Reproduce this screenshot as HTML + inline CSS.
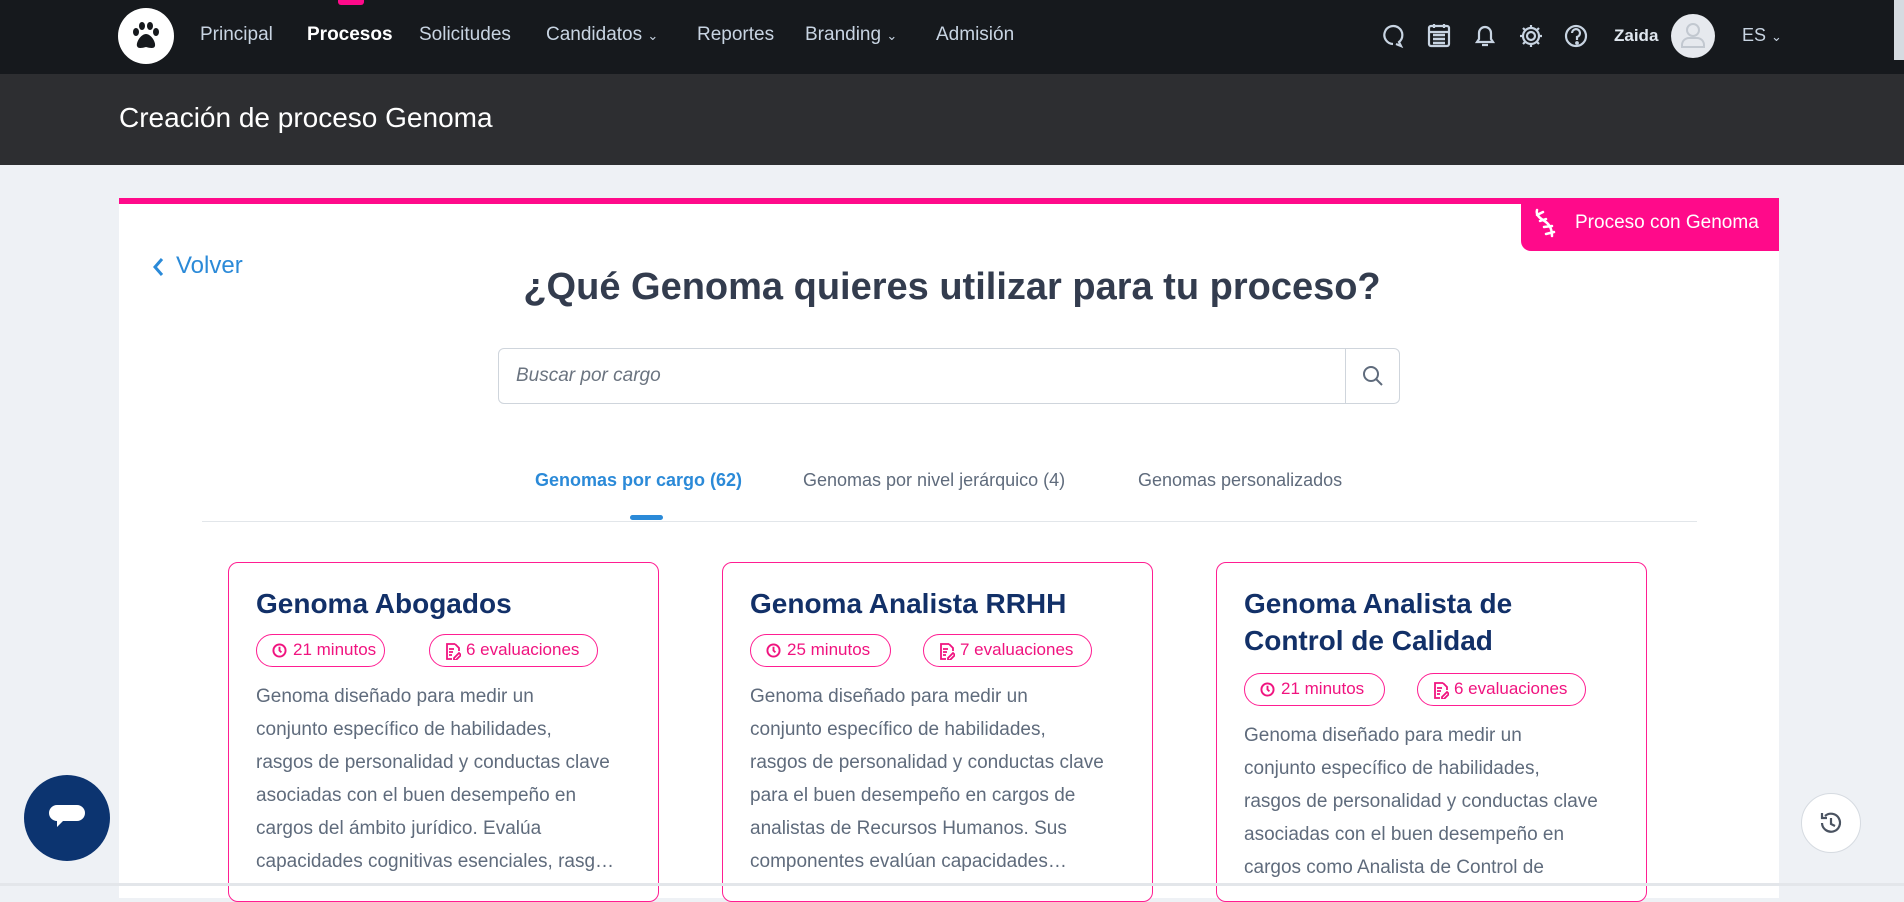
<!DOCTYPE html>
<html><head><meta charset="utf-8"><style>
*{margin:0;padding:0;box-sizing:border-box}
body{width:1904px;height:886px;overflow:hidden;background:#eef1f5;font-family:"Liberation Sans",sans-serif;position:relative}
.abs{position:absolute;white-space:nowrap}
.nav{position:absolute;left:0;top:0;width:1904px;height:74px;background:#16191d}
.hdr{position:absolute;left:0;top:74px;width:1904px;height:91px;background:#2d2e31}
.ni{position:absolute;top:24px;font-size:19px;color:#c8d4e2}
.card{position:absolute;left:119px;top:198px;width:1660px;height:700px;background:#fff;border-top:6px solid #ff0a8a}
.gc{position:absolute;top:562px;width:431px;height:340px;border:1.5px solid #ff1e92;border-radius:10px;background:#fff}
.gt{position:absolute;left:27px;font-size:28px;font-weight:bold;color:#123068;white-space:nowrap;line-height:37px}
.pill{position:absolute;height:33px;border:1.5px solid #ff1e92;border-radius:17px;color:#f0137f;font-size:17px;line-height:30px;padding-left:36px;white-space:nowrap}
.pill svg{position:absolute;left:15px;top:8px}
.desc{position:absolute;left:27px;font-size:19px;color:#5f6b7c;line-height:33px;white-space:nowrap}
</style></head><body>
<div class="nav"></div>
<div class="abs" style="left:338px;top:0;width:26px;height:5px;background:#ff0a8a;border-radius:0 0 3px 3px"></div>
<div class="abs" style="left:118px;top:8px;width:56px;height:56px;border-radius:50%;background:#fff"></div>
<svg class="abs" style="left:128px;top:18px" width="36" height="36" viewBox="0 0 36 36"><g fill="#16191d"><ellipse cx="8" cy="14" rx="3" ry="4"/><ellipse cx="14" cy="8" rx="3" ry="4"/><ellipse cx="22" cy="8" rx="3" ry="4"/><ellipse cx="28" cy="14" rx="3" ry="4"/><path d="M18 16c-5 0-10 8-9 12 1 3 5 2 9 1 4 1 8 2 9-1 1-4-4-12-9-12z"/></g></svg>
<div class="ni" style="left:200px">Principal</div>
<div class="ni" style="left:307px;color:#fff;font-weight:bold">Procesos</div>
<div class="ni" style="left:419px">Solicitudes</div>
<div class="ni" style="left:546px">Candidatos <span style="font-size:13px">⌄</span></div>
<div class="ni" style="left:697px">Reportes</div>
<div class="ni" style="left:805px">Branding <span style="font-size:13px">⌄</span></div>
<div class="ni" style="left:936px">Admisión</div>
<svg class="abs" style="left:1380px;top:22px" width="220" height="28" viewBox="0 0 220 28" fill="none" stroke="#c8d4e2" stroke-width="2.2">
<path d="M13 22a9 9 0 1 1 6-2l2 4-5-2"/><rect x="49" y="4" width="20" height="20" rx="2"/><path d="M49 10h20M54 2v4M64 2v4"/><path d="M53 13h12M53 17h12M53 21h12" stroke-width="2.5"/>
<path d="M97 20h16l-2-3v-6a6 6 0 0 0-12 0v6z M102 23h6"/>
<circle cx="151" cy="14" r="4"/><path d="M151 3v3M151 22v3M140 14h3M159 14h3M143 6l2 2M157 20l2 2M143 22l2-2M157 8l2-2"/><circle cx="151" cy="14" r="8"/>
<circle cx="196" cy="14" r="10"/><path d="M192 11a4 4 0 1 1 5 4v3"/><circle cx="197" cy="21" r="0.8" fill="#c8d4e2"/>
</svg>
<div class="abs" style="left:1614px;top:26px;font-size:17px;font-weight:bold;color:#dfe6ee">Zaida</div>
<div class="abs" style="left:1671px;top:14px;width:44px;height:44px;border-radius:50%;background:#e6e9ee"></div>
<svg class="abs" style="left:1679px;top:20px" width="28" height="30" viewBox="0 0 28 30" fill="none" stroke="#c2c8d0" stroke-width="2"><circle cx="14" cy="10" r="6"/><path d="M3 27v-2a7 7 0 0 1 7-7h8a7 7 0 0 1 7 7v2z"/></svg>
<div class="abs" style="left:1742px;top:25px;font-size:18px;color:#c8d4e2">ES <span style="font-size:13px">⌄</span></div>
<div class="abs" style="left:1894px;top:0;width:10px;height:60px;background:#d6dbe1"></div>
<div class="hdr"></div>
<div class="abs" style="left:119px;top:102px;font-size:28px;color:#fff">Creación de proceso Genoma</div>
<div class="card"></div>
<div class="abs" style="left:1521px;top:198px;width:258px;height:53px;background:#ff0a8a;border-radius:0 0 0 10px"></div>
<svg class="abs" style="left:1532px;top:206px" width="28" height="36" viewBox="0 0 28 36" fill="none" stroke="#fff" stroke-width="2.5" stroke-linecap="round"><path d="M5 4c-1 4 1 7 6 10 5 3 9 7 9 16M5 9l6-3M8 15l6-2M12 21l8-1M14 28l8-2"/></svg>
<div class="abs" style="left:1575px;top:212px;font-size:19px;color:#fff">Proceso con Genoma</div>
<svg class="abs" style="left:151px;top:256px" width="14" height="22" viewBox="0 0 14 22" fill="none" stroke="#2b8ad8" stroke-width="3"><path d="M11 3l-7 8 7 8"/></svg>
<div class="abs" style="left:176px;top:252px;font-size:24px;color:#2b8ad8">Volver</div>
<div class="abs" style="left:0;width:1904px;text-align:center;top:266px;font-size:38px;font-weight:bold;color:#333c4e">¿Qué Genoma quieres utilizar para tu proceso?</div>
<div class="abs" style="left:498px;top:348px;width:902px;height:56px;border:1px solid #cfd5dc;border-radius:6px;background:#fff"></div>
<div class="abs" style="left:1345px;top:348px;width:1px;height:56px;background:#cfd5dc"></div>
<div class="abs" style="left:516px;top:365px;font-size:19px;font-style:italic;color:#6b7480">Buscar por cargo</div>
<svg class="abs" style="left:1361px;top:364px" width="24" height="24" viewBox="0 0 24 24" fill="none" stroke="#5f6b7c" stroke-width="2"><circle cx="10" cy="10" r="7"/><path d="M15 15l6 6"/></svg>
<div class="abs" style="left:535px;top:470px;font-size:18px;font-weight:bold;color:#2b8ad8">Genomas por cargo (62)</div>
<div class="abs" style="left:803px;top:470px;font-size:18px;color:#5f6b7c">Genomas por nivel jerárquico (4)</div>
<div class="abs" style="left:1138px;top:470px;font-size:18px;color:#5f6b7c">Genomas personalizados</div>
<div class="abs" style="left:202px;top:521px;width:1495px;height:1px;background:#e2e6ea"></div>
<div class="abs" style="left:630px;top:515px;width:33px;height:5px;border-radius:3px;background:#2b8ad8"></div>

<div class="gc" style="left:228px">
<div class="gt" style="top:22px">Genoma Abogados</div>
<div class="pill" style="left:27px;top:71px;width:129px"><svg width="15" height="15" viewBox="0 0 16 16" fill="none" stroke="#f0137f" stroke-width="2"><circle cx="8" cy="8" r="6.5"/><path d="M8 4v4l2 2"/></svg>21 minutos</div>
<div class="pill" style="left:200px;top:71px;width:169px"><svg width="16" height="17" viewBox="0 0 16 17" fill="none" stroke="#f0137f" stroke-width="1.8"><path d="M10 1H2v15h5M10 1l4 4v3M4 6h5M4 9h4M4 12h3M9 15l5-5 2 2-5 5h-2z"/></svg>6 evaluaciones</div>
<div class="desc" style="top:117px">Genoma diseñado para medir un<br>conjunto específico de habilidades,<br>rasgos de personalidad y conductas clave<br>asociadas con el buen desempeño en<br>cargos del ámbito jurídico. Evalúa<br>capacidades cognitivas esenciales, rasg…</div>
</div>
<div class="gc" style="left:722px">
<div class="gt" style="top:22px">Genoma Analista RRHH</div>
<div class="pill" style="left:27px;top:71px;width:141px"><svg width="15" height="15" viewBox="0 0 16 16" fill="none" stroke="#f0137f" stroke-width="2"><circle cx="8" cy="8" r="6.5"/><path d="M8 4v4l2 2"/></svg>25 minutos</div>
<div class="pill" style="left:200px;top:71px;width:169px"><svg width="16" height="17" viewBox="0 0 16 17" fill="none" stroke="#f0137f" stroke-width="1.8"><path d="M10 1H2v15h5M10 1l4 4v3M4 6h5M4 9h4M4 12h3M9 15l5-5 2 2-5 5h-2z"/></svg>7 evaluaciones</div>
<div class="desc" style="top:117px">Genoma diseñado para medir un<br>conjunto específico de habilidades,<br>rasgos de personalidad y conductas clave<br>para el buen desempeño en cargos de<br>analistas de Recursos Humanos. Sus<br>componentes evalúan capacidades…</div>
</div>
<div class="gc" style="left:1216px">
<div class="gt" style="top:22px">Genoma Analista de<br>Control de Calidad</div>
<div class="pill" style="left:27px;top:110px;width:141px"><svg width="15" height="15" viewBox="0 0 16 16" fill="none" stroke="#f0137f" stroke-width="2"><circle cx="8" cy="8" r="6.5"/><path d="M8 4v4l2 2"/></svg>21 minutos</div>
<div class="pill" style="left:200px;top:110px;width:169px"><svg width="16" height="17" viewBox="0 0 16 17" fill="none" stroke="#f0137f" stroke-width="1.8"><path d="M10 1H2v15h5M10 1l4 4v3M4 6h5M4 9h4M4 12h3M9 15l5-5 2 2-5 5h-2z"/></svg>6 evaluaciones</div>
<div class="desc" style="top:156px">Genoma diseñado para medir un<br>conjunto específico de habilidades,<br>rasgos de personalidad y conductas clave<br>asociadas con el buen desempeño en<br>cargos como Analista de Control de</div>
</div>
<div class="abs" style="left:0;top:883px;width:1904px;height:3px;background:#e3e6ea"></div>
<div class="abs" style="left:24px;top:775px;width:86px;height:86px;border-radius:50%;background:#0c3470"></div>
<svg class="abs" style="left:47px;top:801px" width="40" height="36" viewBox="0 0 40 36"><path d="M10 4h20a8 8 0 0 1 0 16H16l-6 6v-6a8 8 0 0 1 0-16z" fill="#fff"/></svg>
<div class="abs" style="left:1801px;top:793px;width:60px;height:60px;border-radius:50%;background:#fff;border:1px solid #d6dbe1"></div>
<svg class="abs" style="left:1818px;top:810px" width="26" height="26" viewBox="0 0 26 26" fill="none" stroke="#4a5361" stroke-width="2.2"><path d="M4 13a9 9 0 1 0 3-7M4 3v5h5M13 8v6l4 2"/></svg>
</body></html>
